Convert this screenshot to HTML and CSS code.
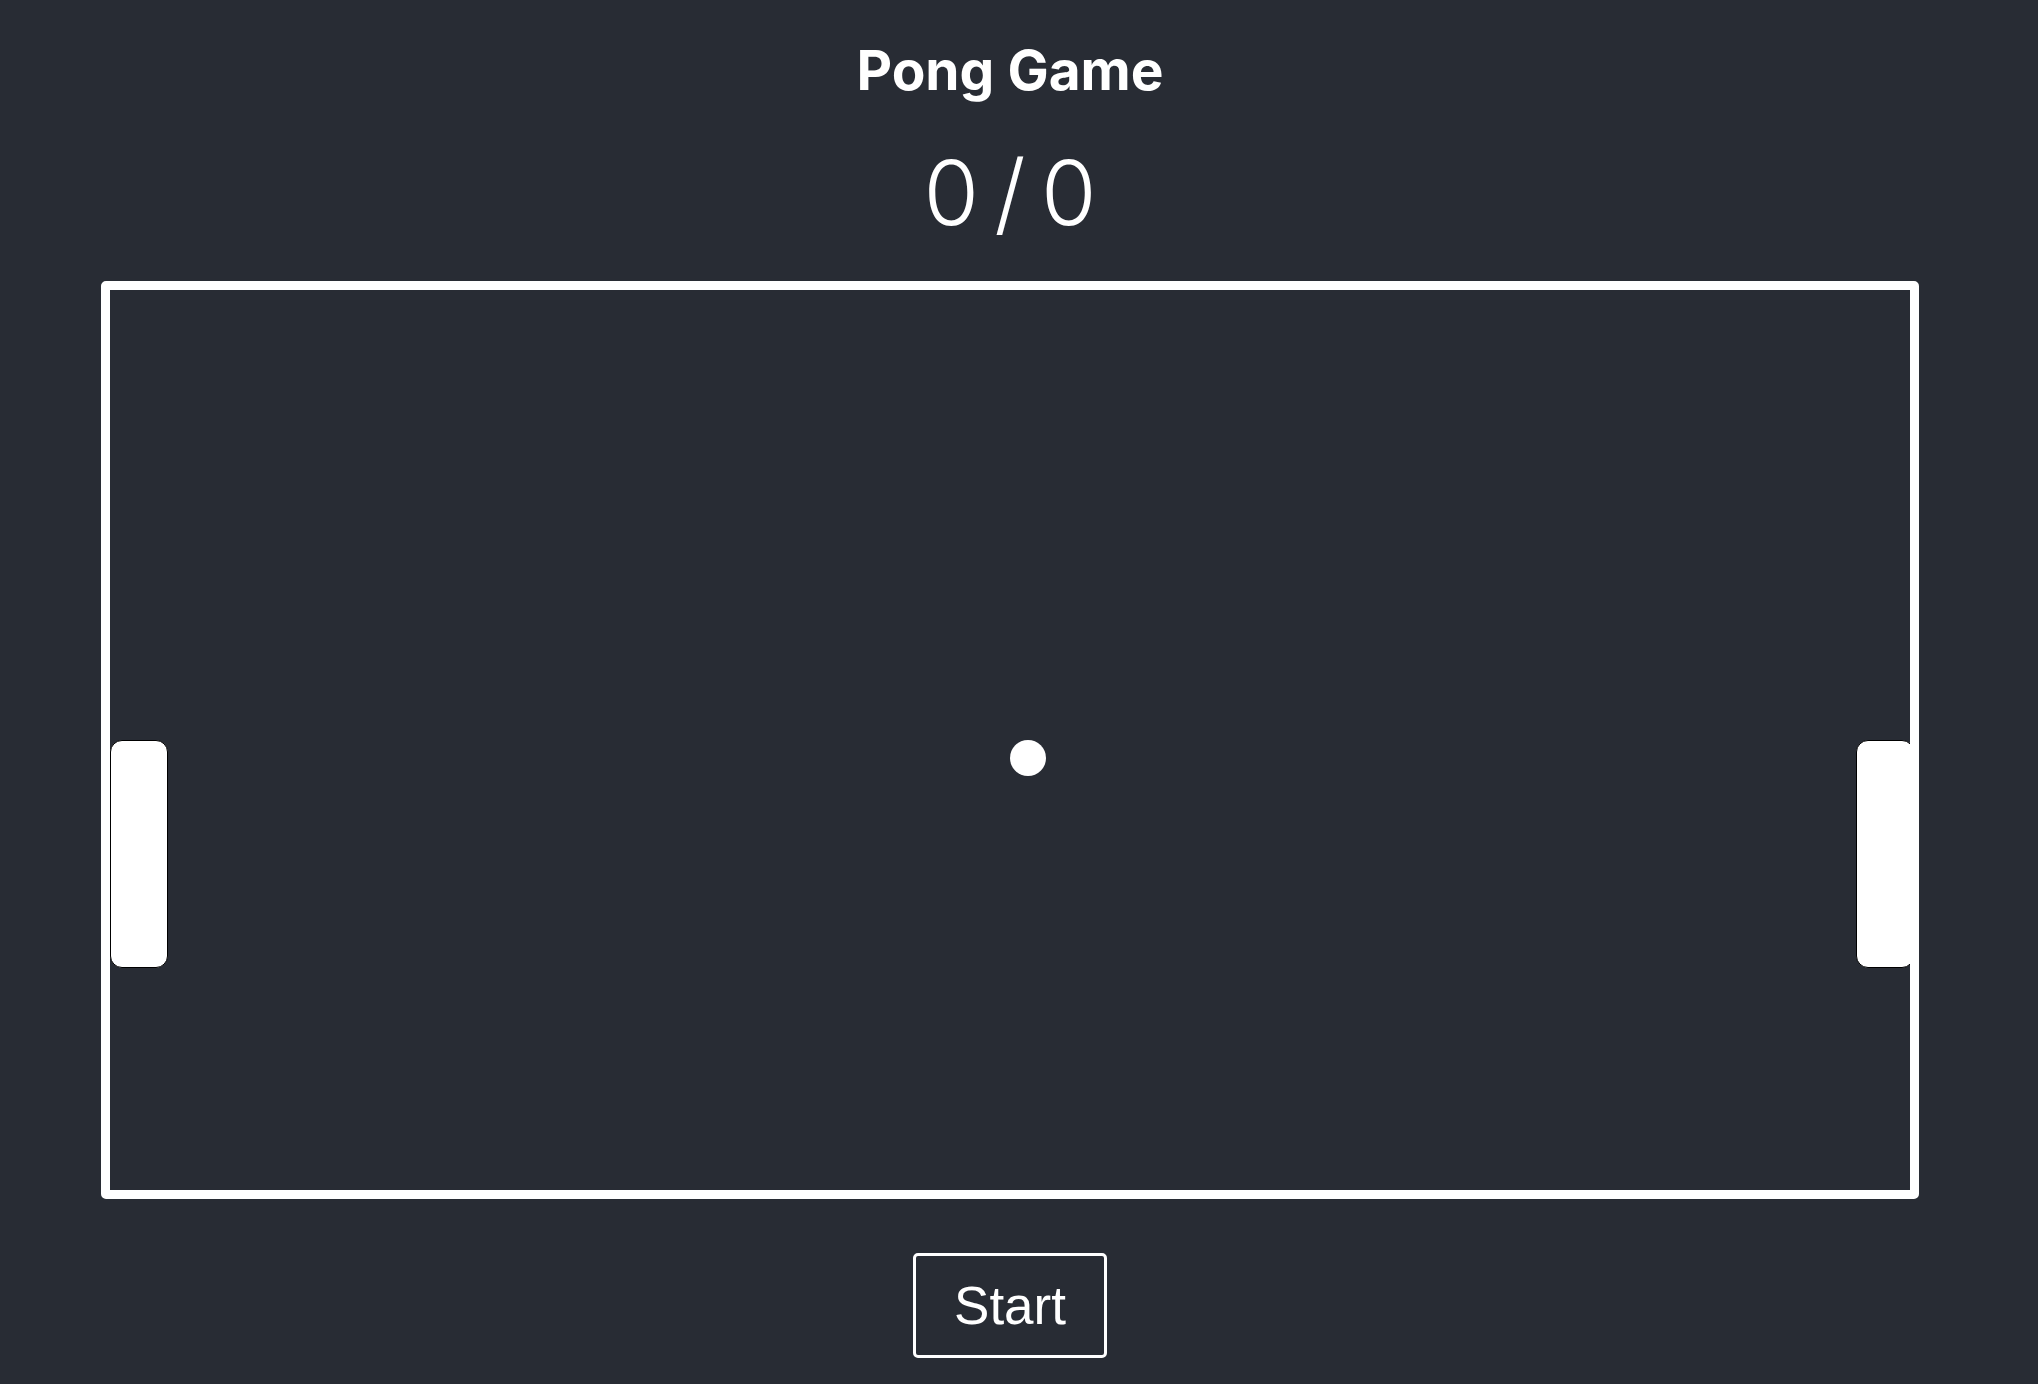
FILE: index.html
```html
<!DOCTYPE html>
<html lang="en">
<head>
<meta charset="utf-8">
<title>Pong Game</title>
<link rel="stylesheet" href="styles.css">
</head>
<body>
<div class="app">
  <h1 class="title">Pong Game</h1>
  <div class="score">0 / 0</div>
  <div class="board">
    <div class="paddle paddle-left"></div>
    <div class="ball"></div>
    <div class="paddle paddle-right"></div>
  </div>
  <button class="start">Start</button>
</div>
</body>
</html>
```
FILE: styles.css
```css
html, body {
  margin: 0;
  padding: 0;
  background: #282c34;
  height: 100%;
  overflow: hidden;
}
.app {
  width: 2020px;
  display: flex;
  flex-direction: column;
  align-items: center;
  color: #fff;
  font-family: Inter, "Noto Sans", sans-serif;
}
.title {
  margin: 37px 0 0;
  font-size: 55px;
  line-height: 66px;
  font-weight: 700;
}
.score {
  margin-top: 37px;
  font-size: 90px;
  line-height: 106px;
  font-weight: 300;
  word-spacing: -10px;
}
.board {
  margin-top: 35px;
  position: relative;
  width: 1800px;
  height: 900px;
  border: 9px solid #fff;
  border-radius: 5px;
  overflow: hidden;
  background: #282c34;
}
.paddle {
  position: absolute;
  top: 450px;
  width: 58px;
  height: 228px;
  box-sizing: border-box;
  background: #fff;
  border: 1px solid #000;
  border-radius: 12px;
}
.paddle-left { left: 0; }
.paddle-right { left: 1746px; }
.ball {
  position: absolute;
  left: 900px;
  top: 450px;
  width: 36px;
  height: 36px;
  border-radius: 50%;
  background: #fff;
}
.start {
  margin-top: 54px;
  width: 194px;
  box-sizing: border-box;
  padding: 20px 0 19px;
  background: transparent;
  color: #fff;
  border: 3px solid #fff;
  border-radius: 5px;
  font-family: "Liberation Sans", Arial, sans-serif;
  font-size: 53px;
  line-height: 60px;
}
```
